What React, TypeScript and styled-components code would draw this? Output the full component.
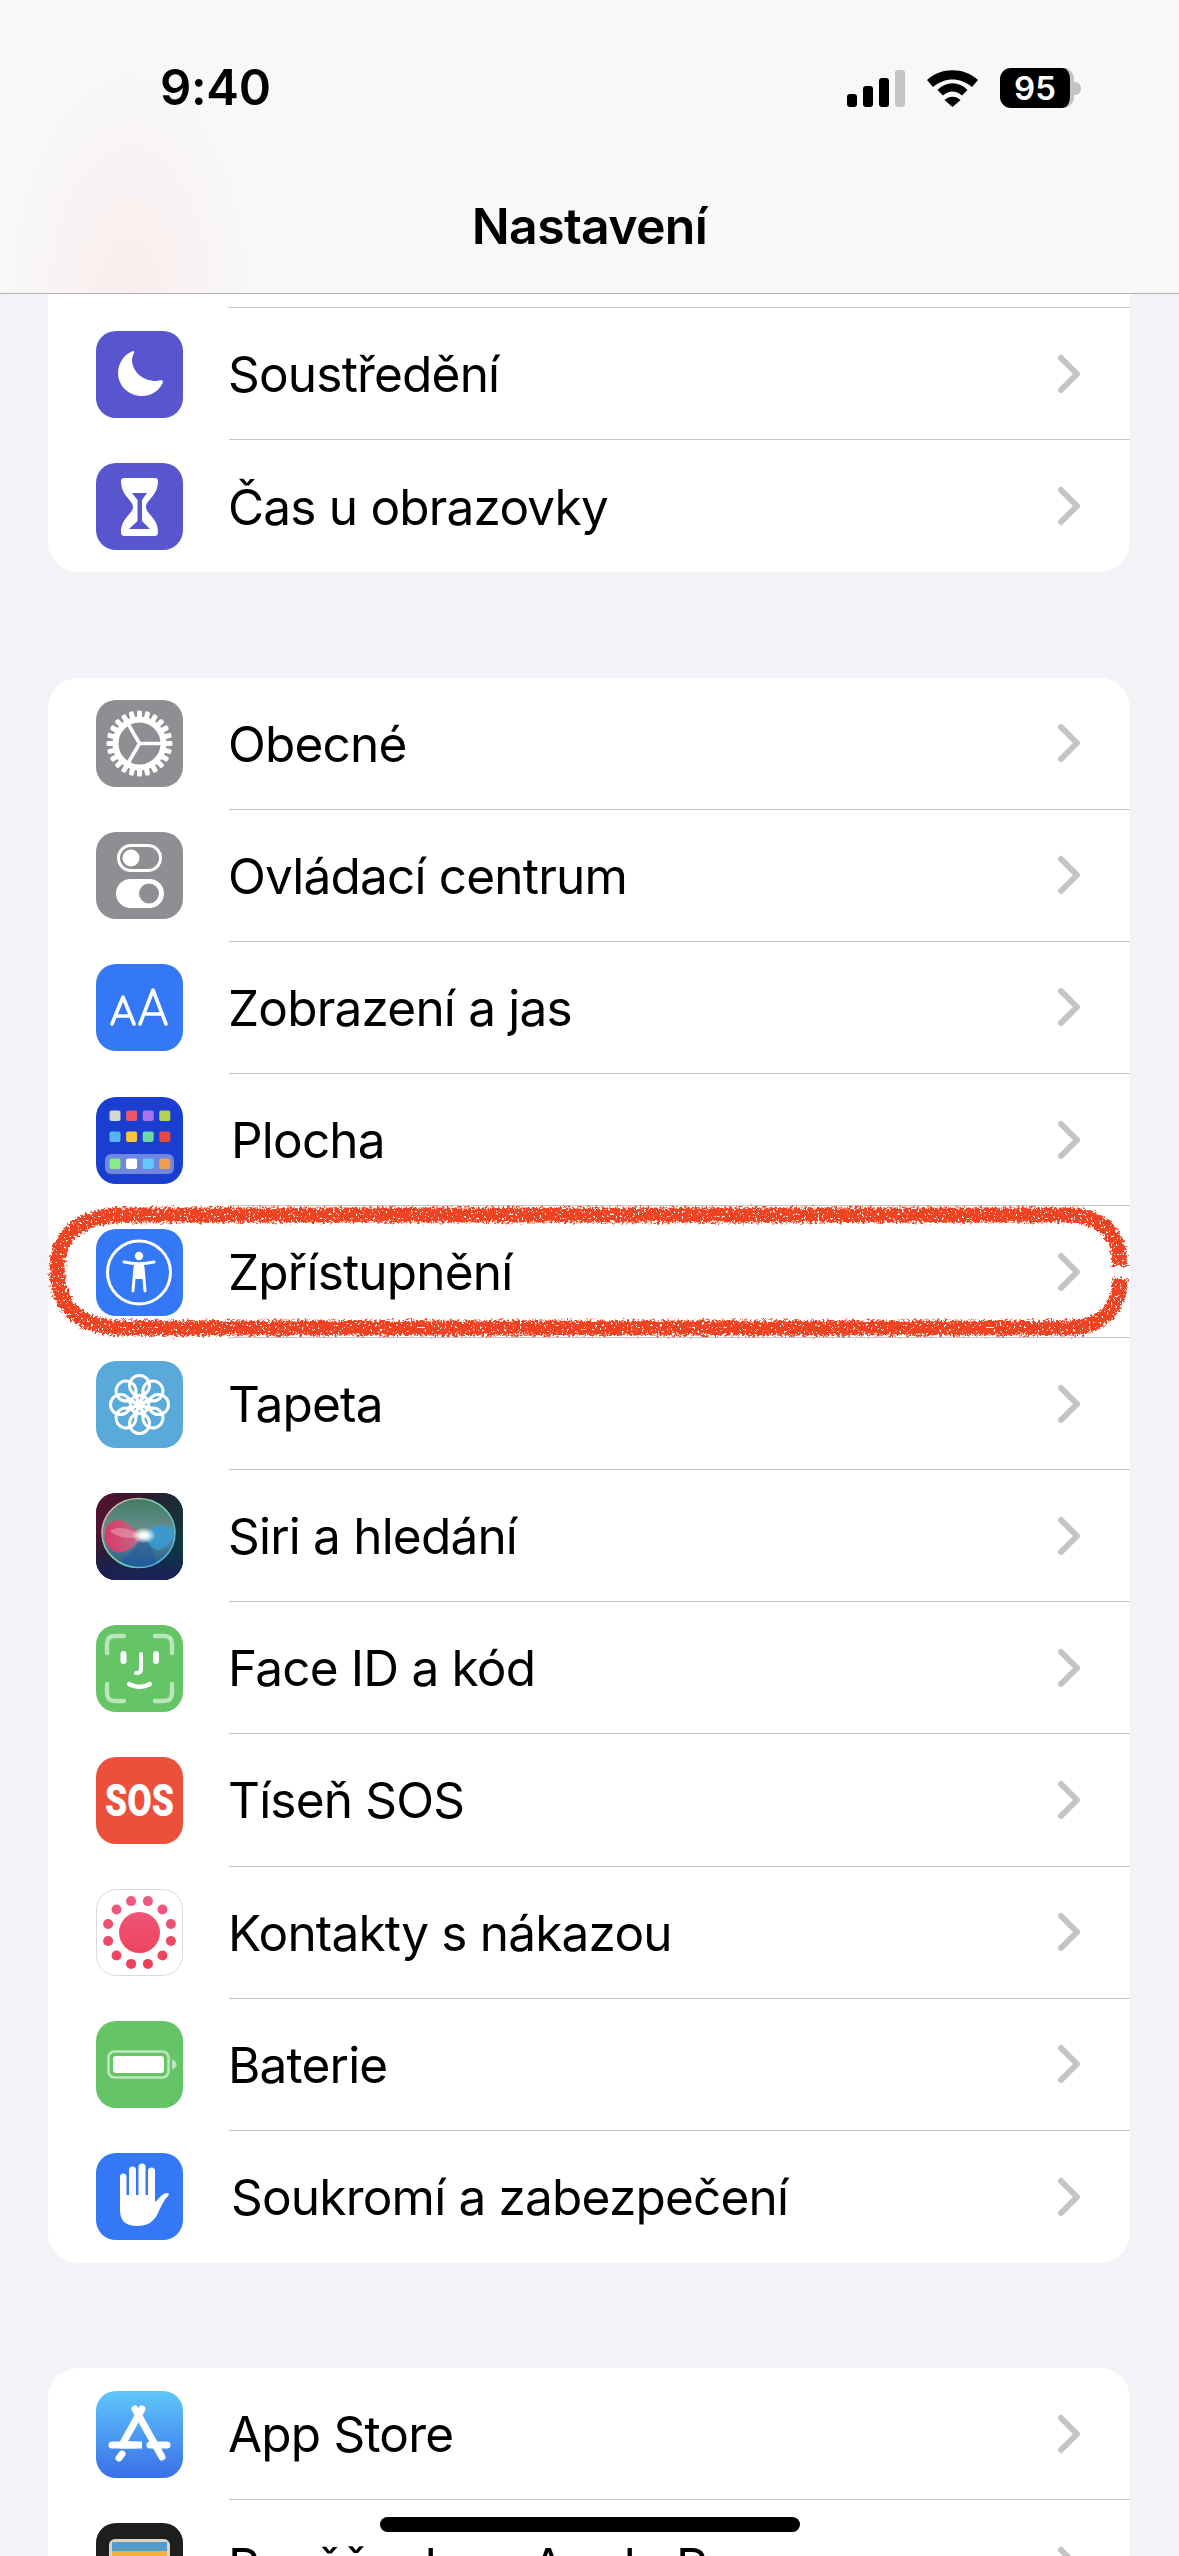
import { ReactNode } from "react";
import styled, { createGlobalStyle } from "styled-components";

const Global = createGlobalStyle`
	html, body {
		margin: 0;
		padding: 0;
		background: #f2f2f7;
	}
`;

const Page = styled.div`
	position: relative;
	width: 1179px;
	height: 2556px;
	overflow: hidden;
	background: #f2f2f7;
	font-family: Inter, "Liberation Sans", sans-serif;
	color: #000;
`;

const Nav = styled.header`
	position: relative;
	height: 294px;
	box-sizing: border-box;
	border-bottom: 1px solid #b2b2b2;
	background:
		radial-gradient(ellipse 120px 230px at 130px 300px, rgba(255, 226, 226, 0.5), rgba(255, 226, 226, 0)),
		#f8f8f8;
`;

const StatusBar = styled.div`
	display: flex;
	justify-content: space-between;
	align-items: center;
	height: 44px;
	padding: 66px 0 0 160px;
`;

const Time = styled.span`
	font-size: 49px;
	font-weight: 600;
	letter-spacing: -0.3px;
	line-height: 44px;
`;

const StatusIcons = styled.div`
	display: flex;
	align-items: center;
	gap: 22px;
	padding-right: 98px;
`;

const Battery = styled.div`
	display: flex;
	align-items: center;
`;

const BatteryBody = styled.div`
	display: flex;
	justify-content: center;
	align-items: center;
	width: 74px;
	height: 40px;
	box-sizing: border-box;
	background: #000;
	border-radius: 11px;
	border-right: 4px solid #c4c4c4;
	color: #fff;
	font-size: 33px;
	font-weight: 600;
`;

const BatteryCap = styled.div`
	width: 7px;
	height: 13px;
	background: #c4c4c4;
	border-radius: 0 6px 6px 0;
`;

const NavTitle = styled.h1`
	margin: 0;
	padding-top: 86px;
	text-align: center;
	font-size: 50px;
	font-weight: 600;
	letter-spacing: -0.7px;
	line-height: 60px;
`;

const List = styled.main`
	display: flex;
	flex-direction: column;
	gap: 105.5px;
	padding: 0 49px 0 48px;
`;

const Card = styled.section`
	background: #fff;
	border-radius: 30px;
	overflow: hidden;

	&:first-child {
		border-radius: 0 0 30px 30px;
	}
`;

const CutRow = styled.div`
	height: 13px;
	margin-left: 180px;
	border-bottom: 1px solid #c6c6c8;
`;

const RowBox = styled.div`
	display: flex;
	align-items: center;
	height: 132.1px;
	box-sizing: border-box;
	padding-left: 48px;
`;

const IconBox = styled.div<{ $bg: string }>`
	flex: none;
	width: 87px;
	height: 87px;
	border-radius: 20px;
	background: ${(p) => p.$bg};
	overflow: hidden;

	svg {
		display: block;
		width: 87px;
		height: 87px;
	}
`;

const RowBody = styled.div<{ $inset: number; $last?: boolean }>`
	flex: 1;
	align-self: stretch;
	display: flex;
	justify-content: space-between;
	align-items: center;
	margin-left: ${(p) => p.$inset}px;
	padding-right: 49px;
	border-bottom: ${(p) => (p.$last ? "none" : "1px solid #c6c6c8")};
`;

const Label = styled.span`
	margin-left: -1px;
	padding-top: 1px;
	font-size: 49.5px;
	font-weight: 400;
	letter-spacing: -0.8px;
	white-space: nowrap;
`;

const Chevron = styled.svg`
	flex: none;
	width: 24px;
	height: 40px;
`;

const HomeBar = styled.div`
	position: absolute;
	left: 380px;
	top: 2517px;
	width: 420px;
	height: 15px;
	border-radius: 8px;
	background: #000;
`;

const Scribble = styled.svg`
	position: absolute;
	left: 40px;
	top: 1198px;
	width: 1100px;
	height: 148px;
	pointer-events: none;
`;

const SosText = styled.svg`
	text {
		font-family: Roboto, sans-serif;
		font-size: 45px;
		font-weight: 900;
		fill: #fff;
	}
`;

type RowProps = {
	bg: string;
	label: string;
	icon: ReactNode;
	inset?: number;
	last?: boolean;
};

const Row = ({ bg, label, icon, inset = 46, last }: RowProps) => (
	<RowBox>
		<IconBox $bg={bg}>{icon}</IconBox>
		<RowBody $inset={inset} $last={last}>
			<Label>{label}</Label>
			<Chevron viewBox="0 0 24 40">
				<path d="M4 4 L20 20 L4 36" fill="none" stroke="#c4c4c6" strokeWidth="6" strokeLinecap="round" strokeLinejoin="round" />
			</Chevron>
		</RowBody>
	</RowBox>
);

const Art = ({ children }: { children: ReactNode }) => <svg viewBox="0 0 87 87">{children}</svg>;

const MoonIcon = () => (
	<Art>
		<path
			d="M37 20 C27 24 22 33 22 42 C22 55 33 65 46 65 C56 65 64 59 67 51 C67 49 65 49 60 50 C47 50 37 41 36 30 C36 26 37 24 38 22 C38 20 38 20 37 20 Z"
			fill="#fff"
		/>
	</Art>
);

const HourglassIcon = () => (
	<Art>
		<path
			d="M28 15 H59 Q62 15 62 18 C62 33 50 37 50 44 C50 51 62 55 62 69 Q62 73 59 73 H28 Q25 73 25 69 C25 55 37 51 37 44 C37 37 25 33 25 18 Q25 15 28 15 Z"
			fill="#fff"
		/>
		<path d="M36 30 H51 L46 37 V58 L54 66 H33 L41.5 58 V37 Z" fill="#5856ce" />
	</Art>
);

const GearIcon = () => {
	const teeth = Array.from({ length: 24 }, (_, i) => i * 15);
	return (
		<Art>
			<g fill="#fff">
				{teeth.map((a) => (
					<rect key={a} x="41" y="10.5" width="5" height="11" rx="1.5" transform={`rotate(${a} 43.5 43.5)`} />
				))}
			</g>
			<circle cx="43.5" cy="43.5" r="24" fill="none" stroke="#fff" strokeWidth="6" />
			<path d="M43.5 43.5 H68 M43.5 43.5 L31 22 M43.5 43.5 L31 65" stroke="#fff" strokeWidth="3.6" fill="none" />
		</Art>
	);
};

const SwitchesIcon = () => (
	<Art>
		<rect x="22.5" y="13.5" width="42" height="25" rx="12.5" fill="none" stroke="#fff" strokeWidth="3" />
		<circle cx="35" cy="26" r="8.5" fill="#fff" />
		<rect x="20" y="47" width="48" height="29" rx="14.5" fill="#fff" />
		<circle cx="53" cy="61.5" r="10" fill="#8e8e93" />
	</Art>
);

const TextSizeIcon = () => (
	<Art>
		<g fill="none" stroke="#fff" strokeWidth="3.6" strokeLinecap="round" strokeLinejoin="round">
			<path d="M16 60 L27 33 L38 60 M20 52 H34" />
			<path d="M44 60 L57 26 L70 60 M48 50 H66" />
		</g>
	</Art>
);

const homeDots = [
	["#d6d6cf", "#ec5766", "#a874ee", "#b7d24f"],
	["#58b5f5", "#f4c63f", "#6fd6a5", "#e74a3d"],
];
const dockDots = ["#8aec86", "#ffffff", "#63c9f7", "#f09f50"];

const HomeIcon = () => (
	<Art>
		{homeDots.map((line, y) =>
			line.map((c, x) => <rect key={`${x}-${y}`} x={13.5 + x * 16.6} y={13.5 + y * 21} width="11" height="10.5" rx="2" fill={c} />),
		)}
		<rect x="9" y="57" width="69" height="20" rx="6" fill="#6f87e0" />
		{dockDots.map((c, x) => (
			<rect key={c} x={13.5 + x * 16.6} y="61.5" width="11" height="10.5" rx="2" fill={c} />
		))}
	</Art>
);

const AccessIcon = () => (
	<Art>
		<circle cx="43" cy="43.5" r="31.5" fill="none" stroke="#fff" strokeWidth="3" />
		<circle cx="43" cy="27" r="4.2" fill="#fff" />
		<path d="M28 33 Q43 36.5 58 33 M39 38 L37 62 M47 38 L49 62" stroke="#fff" strokeWidth="3" strokeLinecap="round" fill="none" />
		<path d="M38 35 H48 L47.5 50 H38.5 Z" fill="#fff" />
	</Art>
);

const FlowerIcon = () => {
	const petals = [0, 45, 90, 135, 180, 225, 270, 315];
	return (
		<Art>
			<g fill="none" stroke="#fff" strokeWidth="3">
				{petals.map((a) => (
					<circle key={a} cx="43.5" cy="24.5" r="10" transform={`rotate(${a} 43.5 43.5)`} />
				))}
				{petals.map((a) => (
					<path key={a} d="M43.5 43.5 L37 31 M43.5 43.5 L50 31" transform={`rotate(${a} 43.5 43.5)`} strokeWidth="2.6" />
				))}
			</g>
			<circle cx="43.5" cy="43.5" r="5" fill="#fff" />
		</Art>
	);
};

const SiriIcon = () => (
	<Art>
		<defs>
			<linearGradient id="siriBg" x1="0" y1="0" x2="1" y2="0.6">
				<stop offset="0%" stopColor="#5f1030" />
				<stop offset="45%" stopColor="#2a1c30" />
				<stop offset="100%" stopColor="#0f3a3e" />
			</linearGradient>
			<linearGradient id="siriLow" x1="0" y1="0" x2="0" y2="1">
				<stop offset="55%" stopColor="#12265a" stopOpacity="0" />
				<stop offset="100%" stopColor="#1a2058" />
			</linearGradient>
			<linearGradient id="siriBall" x1="0" y1="0" x2="0" y2="1">
				<stop offset="0%" stopColor="#3f7a66" />
				<stop offset="50%" stopColor="#6d8f8c" />
				<stop offset="100%" stopColor="#1f5a92" />
			</linearGradient>
			<linearGradient id="siriPink" x1="0" y1="0" x2="1" y2="0">
				<stop offset="0%" stopColor="#e8305f" />
				<stop offset="100%" stopColor="#c86a90" />
			</linearGradient>
			<radialGradient id="siriGlow">
				<stop offset="0%" stopColor="#fff" />
				<stop offset="35%" stopColor="#fff" stopOpacity="0.9" />
				<stop offset="100%" stopColor="#fff" stopOpacity="0" />
			</radialGradient>
			<linearGradient id="siriRim" x1="0" y1="0.2" x2="1" y2="0.8">
				<stop offset="0%" stopColor="#f3a0ac" />
				<stop offset="50%" stopColor="#6fd8a4" />
				<stop offset="100%" stopColor="#4aa8f0" />
			</linearGradient>
		</defs>
		<rect width="87" height="87" fill="url(#siriBg)" />
		<rect width="87" height="87" fill="url(#siriLow)" />
		<ellipse cx="42.5" cy="40" rx="36.5" ry="34.5" fill="url(#siriBall)" stroke="url(#siriRim)" strokeWidth="1.6" />
		<path d="M47 43 C54 52 60 60 60 70 C48 76 36 75 26 68 C34 60 42 52 47 43 Z" fill="#225a9c" opacity="0.6" />
		<path d="M9 40 C10 28 22 24 31 30 C38 35 42 41 47 43 C40 50 32 62 20 59 C12 55 8 48 9 40 Z" fill="url(#siriPink)" opacity="0.9" />
		<path d="M14 38 C22 32 34 36 47 43 C36 46 22 46 14 38 Z" fill="#f3b4c8" opacity="0.45" />
		<path d="M47 43 C54 34 66 28 75 35 C80 44 72 56 62 57 C55 56 52 48 47 43 Z" fill="#2d9fe0" opacity="0.75" />
		<ellipse cx="48" cy="42.5" rx="12" ry="8" fill="url(#siriGlow)" />
	</Art>
);

const FaceIdIcon = () => (
	<Art>
		<g fill="none" stroke="#b9e6bb" strokeWidth="4.4" strokeLinecap="round">
			<path d="M11 28 V19 Q11 11 19 11 H28" />
			<path d="M59 11 H68 Q76 11 76 19 V28" />
			<path d="M11 59 V68 Q11 76 19 76 H28" />
			<path d="M59 76 H68 Q76 76 76 68 V59" />
		</g>
		<g fill="none" stroke="#fff" strokeLinecap="round">
			<path d="M27.5 29 V36" strokeWidth="6" />
			<path d="M60 29 V36" strokeWidth="6" />
			<path d="M45 29 V44 Q45 48 40 48" strokeWidth="4" />
			<path d="M33 59 Q43.5 65 54 59" strokeWidth="4.4" />
		</g>
	</Art>
);

const SosIcon = () => (
	<SosText viewBox="0 0 87 87">
		<text x="9" y="59" textLength="69" lengthAdjust="spacingAndGlyphs">
			SOS
		</text>
	</SosText>
);

const ExposureIcon = () => {
	const dots = Array.from({ length: 12 }, (_, i) => i * 30 + 15);
	return (
		<Art>
			<defs>
				<linearGradient id="expo" gradientUnits="userSpaceOnUse" x1="0" y1="10" x2="0" y2="78">
					<stop offset="0%" stopColor="#ee5a80" />
					<stop offset="100%" stopColor="#ee3f55" />
				</linearGradient>
			</defs>
			<rect x="0.5" y="0.5" width="86" height="86" rx="20" fill="#fff" stroke="#d8d8d8" />
			<circle cx="43.5" cy="43.5" r="20.5" fill="url(#expo)" />
			{dots.map((a) => {
				const r = (a * Math.PI) / 180;
				return <circle key={a} cx={43.5 + 32.5 * Math.sin(r)} cy={43.5 - 32.5 * Math.cos(r)} r="5" fill="url(#expo)" />;
			})}
		</Art>
	);
};

const BatteryIcon = () => (
	<Art>
		<rect x="12.5" y="30.5" width="60" height="26" rx="6" fill="none" stroke="#bde6bd" strokeWidth="2.6" />
		<rect x="17" y="35" width="51" height="17" rx="3" fill="#fff" />
		<path d="M76 38 L80 41 Q81 43.5 80 46 L76 49 Z" fill="#bde6bd" />
	</Art>
);

const HandIcon = () => (
	<Art>
		<path
			d="M24 24 Q24 20.5 27.5 20.5 Q30.5 20.5 30.5 24 V42 H33 V17 Q33 13.5 36.5 13.5 Q40 13.5 40 17 V42 H42.5 V14 Q42.5 10.5 46 10.5 Q49.5 10.5 49.5 14 V42 H52 V18 Q52 14.5 55.5 14.5 Q59 14.5 59 18 V49 C62 47 65 41 71 40 C73 40 73.5 41.5 72 43 C68 47 65 53 62 60 C58 69 51 73 41 73 C30 73 24 68 24 57 Z"
			fill="#fff"
		/>
	</Art>
);

const AppStoreIcon = () => (
	<Art>
		<g stroke="#fff" strokeWidth="7" strokeLinecap="round" fill="none">
			<path d="M16 54 H40 M54 54 H71" />
			<path d="M46 18 L27 52" />
			<path d="M39 18 L66 66" />
			<path d="M26 63 L23 67" />
		</g>
		<path d="M24 50.5 H46 V57.5 H24 Z" fill="#fff" />
	</Art>
);

const WalletIcon = () => (
	<Art>
		<rect x="13" y="16" width="61" height="55" rx="6" fill="#d8d6c8" />
		<rect x="16" y="19" width="55" height="12" fill="#559ac8" />
		<rect x="16" y="28" width="55" height="12" fill="#f2b03c" />
		<rect x="16" y="37" width="55" height="12" fill="#6fbe55" />
		<rect x="16" y="46" width="55" height="12" fill="#e85c50" />
	</Art>
);

export default function App() {
	return (
		<Page>
			<Global />
			<Nav>
				<StatusBar>
					<Time>9:40</Time>
					<StatusIcons>
						<svg width="58" height="37" viewBox="0 0 58 37">
							<rect x="0" y="24" width="10" height="13" rx="3" fill="#000" />
							<rect x="16" y="16" width="10" height="21" rx="3" fill="#000" />
							<rect x="32" y="8" width="10" height="29" rx="3" fill="#000" />
							<rect x="48" y="0" width="10" height="37" rx="3" fill="#c4c4c4" />
						</svg>
						<svg width="51" height="37" viewBox="0 0 51 37">
							<path d="M0 10 C14 -3 37 -3 51 10 L45 17 C33 7 18 7 6 17 Z" fill="#000" />
							<path d="M10.5 20 C19 11 32 11 40.5 20 L35 25.5 C29 20 22 20 16 25.5 Z" fill="#000" />
							<path d="M17.5 30 C22 25.5 29 25.5 33.5 30 L25.5 37 Z" fill="#000" />
						</svg>
						<Battery>
							<BatteryBody>95</BatteryBody>
							<BatteryCap />
						</Battery>
					</StatusIcons>
				</StatusBar>
				<NavTitle>Nastavení</NavTitle>
			</Nav>
			<List>
				<Card>
					<CutRow />
					<Row bg="#5856ce" label="Soustředění" icon={<MoonIcon />} />
					<Row bg="#5856ce" label="Čas u obrazovky" icon={<HourglassIcon />} last />
				</Card>
				<Card>
					<Row bg="#8e8e93" label="Obecné" icon={<GearIcon />} />
					<Row bg="#8e8e93" label="Ovládací centrum" icon={<SwitchesIcon />} />
					<Row bg="#3478f6" label="Zobrazení a jas" icon={<TextSizeIcon />} />
					<Row bg="#1a3fd0" label="Plocha" icon={<HomeIcon />} inset={49} />
					<Row bg="#3478f6" label="Zpřístupnění" icon={<AccessIcon />} />
					<Row bg="#59a9da" label="Tapeta" icon={<FlowerIcon />} />
					<Row bg="#17222c" label="Siri a hledání" icon={<SiriIcon />} />
					<Row bg="#65c466" label="Face ID a kód" icon={<FaceIdIcon />} />
					<Row bg="#ec503c" label="Tíseň SOS" icon={<SosIcon />} />
					<Row bg="#fff" label="Kontakty s nákazou" icon={<ExposureIcon />} />
					<Row bg="#65c466" label="Baterie" icon={<BatteryIcon />} />
					<Row bg="#3478f6" label="Soukromí a zabezpečení" icon={<HandIcon />} inset={49} last />
				</Card>
				<Card>
					<Row bg="linear-gradient(#5fc7f9, #3a6fe8)" label="App Store" icon={<AppStoreIcon />} />
					<Row bg="#1e1e1e" label="Peněženka a Apple Pay" icon={<WalletIcon />} />
				</Card>
			</List>
			<Scribble viewBox="0 0 1100 148">
				<defs>
					<filter id="rough" x="-2%" y="-15%" width="104%" height="130%" colorInterpolationFilters="sRGB">
						<feTurbulence type="fractalNoise" baseFrequency="0.4" numOctaves="3" seed="4" result="n" />
						<feDisplacementMap in="SourceGraphic" in2="n" scale="9" xChannelSelector="R" yChannelSelector="G" result="d" />
						<feTurbulence type="fractalNoise" baseFrequency="0.45" numOctaves="2" seed="9" result="n2" />
						<feColorMatrix in="n2" type="matrix" values="0 0 0 0 0 0 0 0 0 0 0 0 0 0 0 14 0 0 0 -4" result="m" />
						<feComposite in="d" in2="m" operator="in" />
					</filter>
				</defs>
				<path
					d="M1080 68 C1080 35 1062 17 1026 17 H85 C38 17 17 38 17 72 C17 108 38 130 85 130 H1026 C1062 130 1080 110 1080 80"
					fill="none"
					stroke="#ee4323"
					strokeWidth="15"
					filter="url(#rough)"
				/>
			</Scribble>
			<HomeBar />
		</Page>
	);
}
